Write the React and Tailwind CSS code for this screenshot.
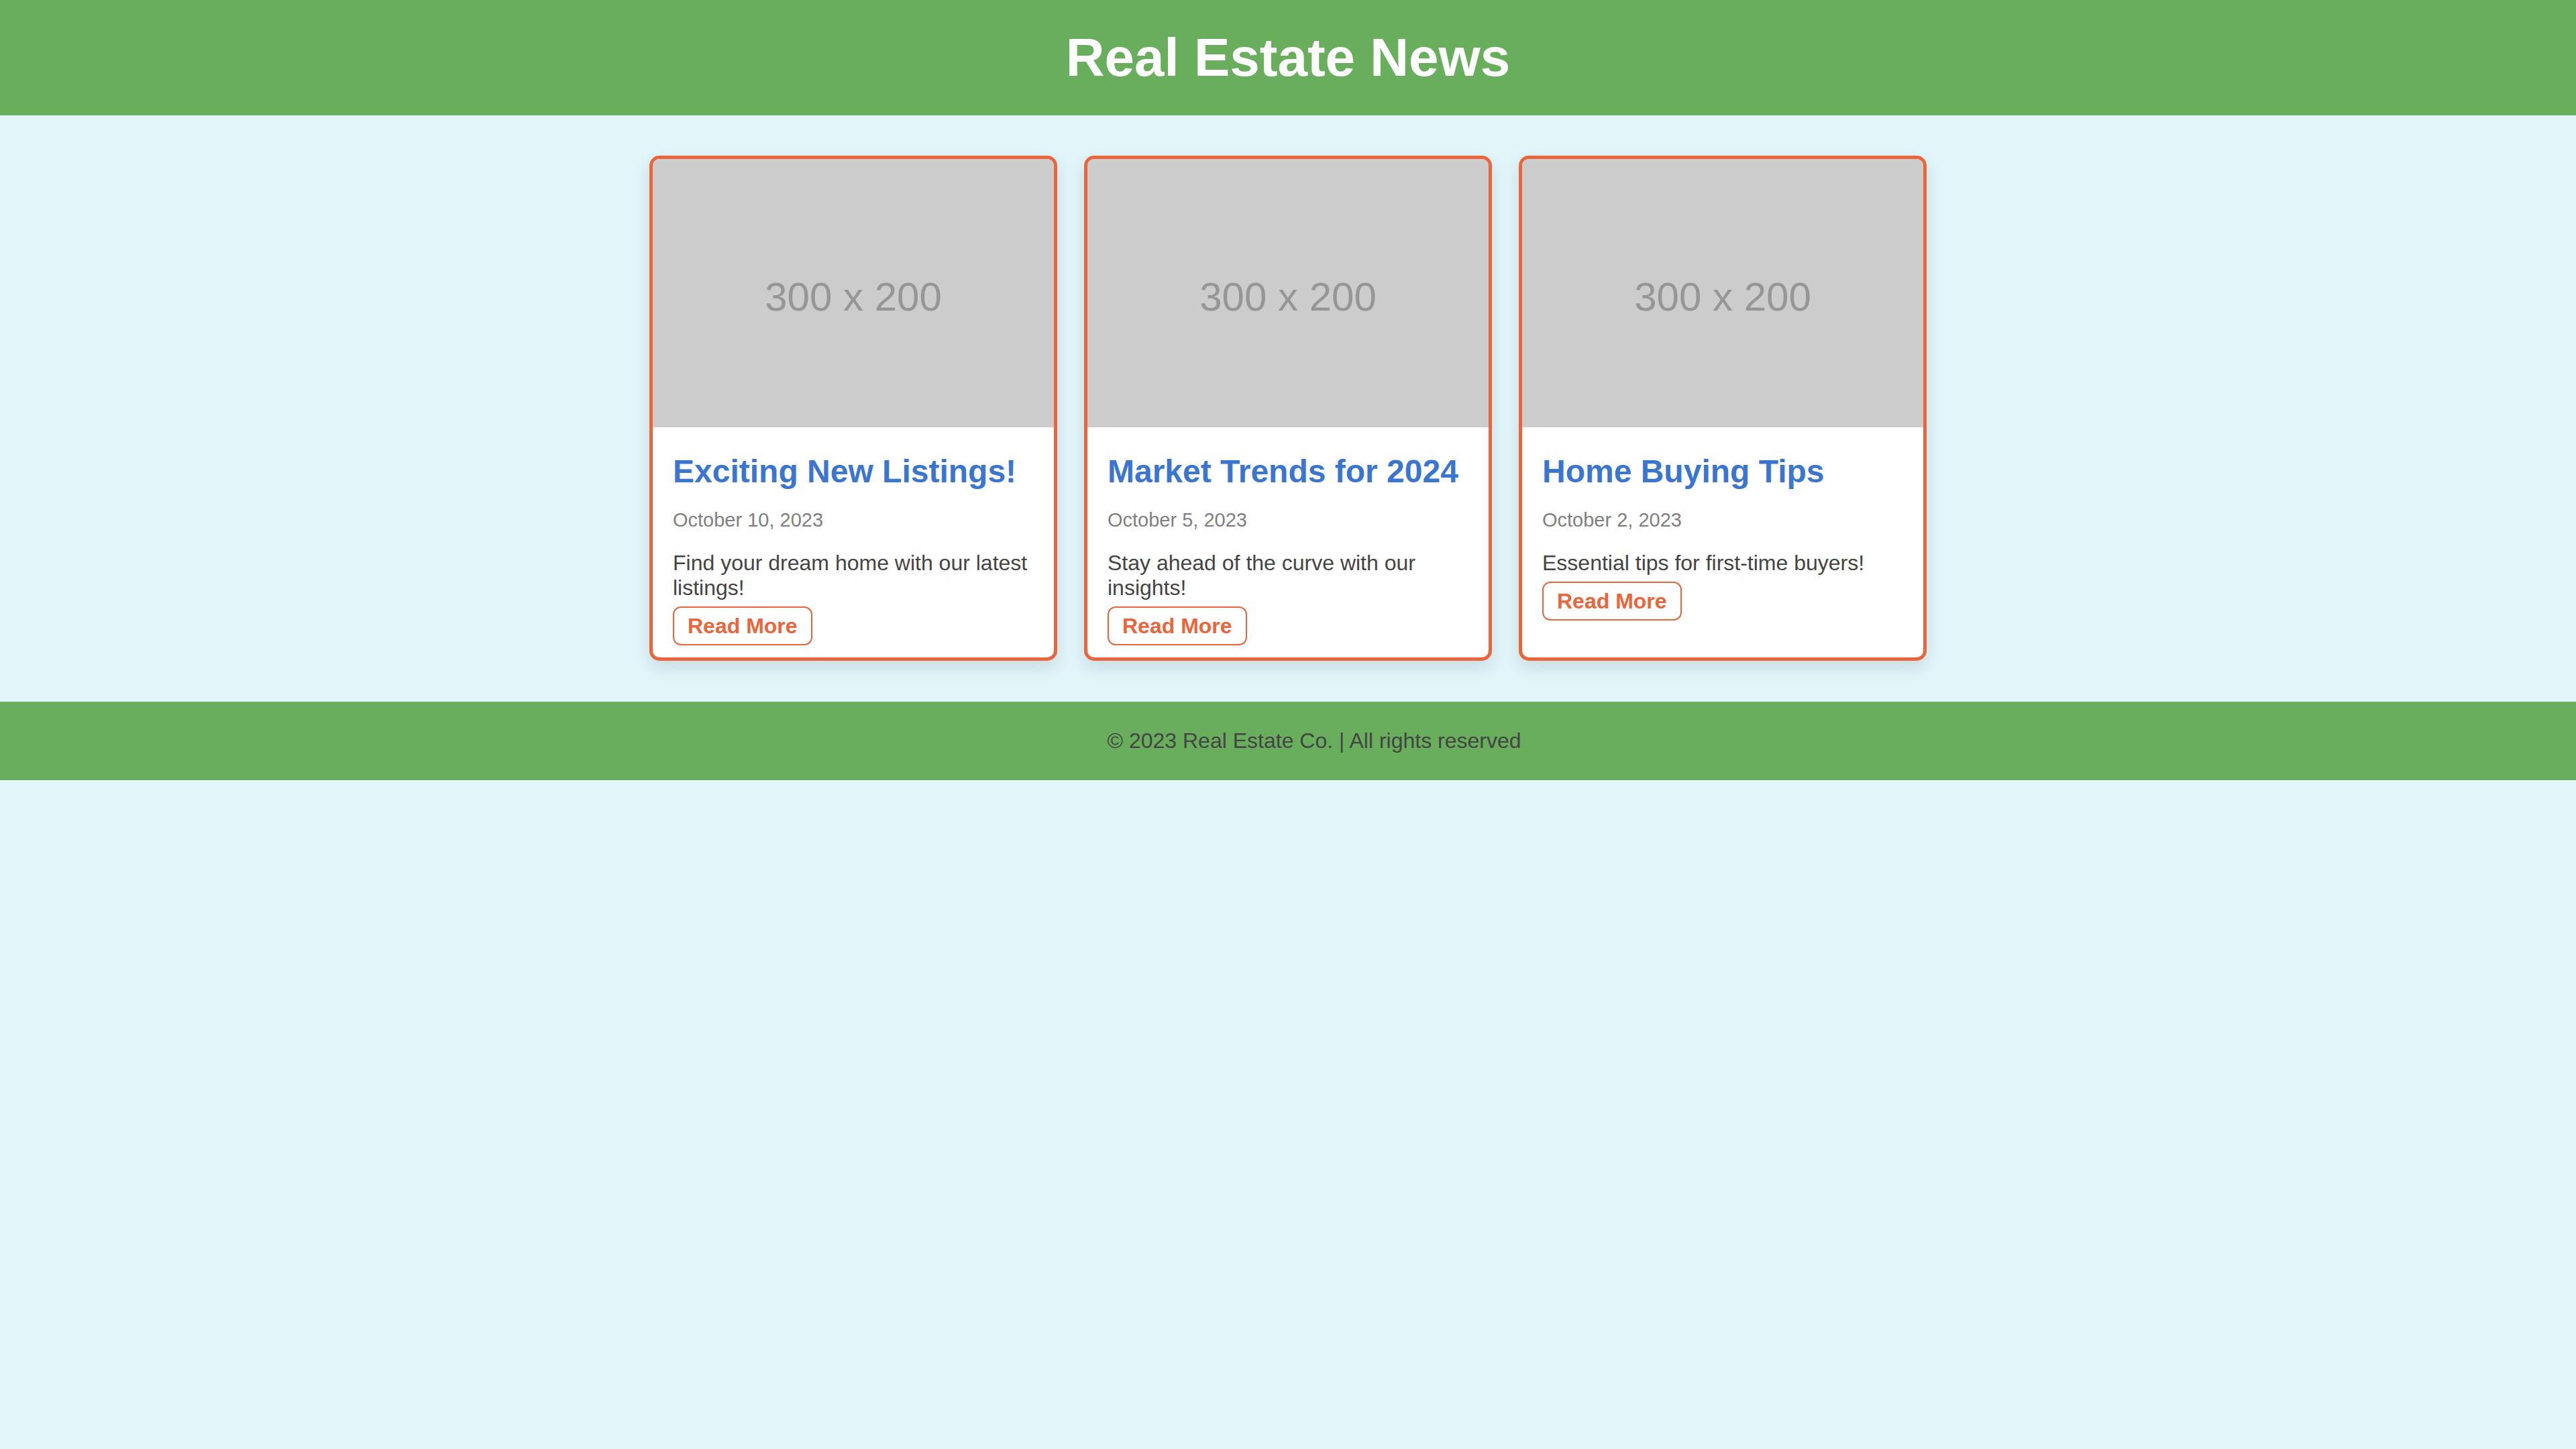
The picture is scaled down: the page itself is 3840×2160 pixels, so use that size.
import React from "react";

const posts = [
  {
    title: "Exciting New Listings!",
    date: "October 10, 2023",
    text: "Find your dream home with our latest listings!",
  },
  {
    title: "Market Trends for 2024",
    date: "October 5, 2023",
    text: "Stay ahead of the curve with our insights!",
  },
  {
    title: "Home Buying Tips",
    date: "October 2, 2023",
    text: "Essential tips for first-time buyers!",
  },
];

function Card({ post }) {
  return (
    <div className="flex flex-col overflow-hidden rounded-[15px] border-[5px] border-[#e9653b] bg-white shadow-[0_10px_25px_rgba(0,40,60,0.12)]">
      <div className="flex h-[400px] items-center justify-center bg-[#cccccc]">
        <span className="mt-[11px] text-[60px] leading-[69px] text-[#969696]">300 x 200</span>
      </div>
      <div className="flex flex-col px-[30px] pt-[30px] pb-[18px]">
        <h3 className="mt-[8px] text-[48px] font-bold leading-[56px] text-[#3a75cf]">{post.title}</h3>
        <p className="mt-[28px] text-[29px] leading-[33px] text-[#808080]">{post.date}</p>
        <p className="mt-[29px] text-[32px] leading-[37px] text-[#444444]">{post.text}</p>
        <div className="mt-[9px]">
          <button className="rounded-[12px] border-2 border-[#e9653b] bg-white px-[20px] py-[9px] text-[32px] font-bold leading-[36px] text-[#e9653b]">
            Read More
          </button>
        </div>
      </div>
    </div>
  );
}

export default function App() {
  return (
    <div className="min-h-[2160px] w-full bg-[#e2f5f9] font-['Liberation_Sans',Arial,sans-serif]">
      <header className="flex h-[172px] items-center justify-center bg-[#68ae5c]">
        <h1 className="text-[80px] font-bold leading-[92px] text-white">Real Estate News</h1>
      </header>
      <main className="flex justify-center pt-[60px] pb-[61px]">
        <div className="grid grid-cols-[608px_608px_608px] gap-[40px]">
          {posts.map((p) => (
            <Card key={p.title} post={p} />
          ))}
        </div>
      </main>
      <footer className="flex h-[117px] items-center justify-center bg-[#68ae5c] pl-[78px]">
        <p className="text-[32px] leading-[37px] text-[#444444]">© 2023 Real Estate Co. | All rights reserved</p>
      </footer>
    </div>
  );
}
